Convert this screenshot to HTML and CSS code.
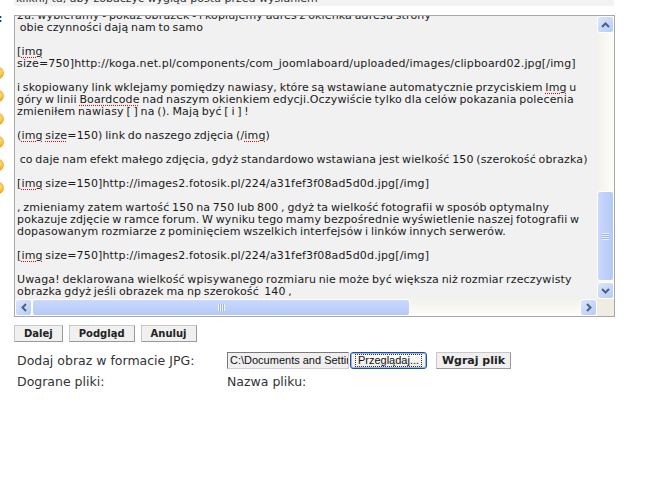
FILE: index.html
```html
<!DOCTYPE html>
<html lang="pl">
<head>
    <meta charset="UTF-8">
    <title>Odpowiedz</title>
    <link rel="stylesheet" href="styles.css">
</head>
<body>
    <div class="page">
        <div class="preview-link"><span>kliknij tu, aby zobaczyć wygląd postu przed wysłaniem</span></div>

        <div class="editor-row">
            <div class="smileys">
                <span class="dots">:</span>
                <span class="smiley first"></span>
                <span class="smiley"></span>
                <span class="smiley"></span>
                <span class="smiley"></span>
                <span class="smiley"></span>
                <span class="smiley"></span>
            </div>

            <div class="editor">
                <div class="editor-text">
<div class="scroll-content">2a. wybieramy - pokaż obrazek - i kopiujemy adres z okienka adresu strony
 obie czynności dają nam to samo

[<span class="spell">img</span>
size=750]http://koga.net.pl/components/com_joomlaboard/uploaded/images/clipboard02.jpg[/img]

i skopiowany link wklejamy pomiędzy nawiasy, które są wstawiane automatycznie przyciskiem <span class="spell">Img</span> u
góry w linii <span class="spell">Boardcode</span> nad naszym okienkiem edycji.Oczywiście tylko dla celów pokazania polecenia
zmieniłem nawiasy [ ] na (). Mają być [ i ] !

(<span class="spell">img</span> <span class="spell">size</span>=150) link do naszego zdjęcia (/<span class="spell">img</span>)

 co daje nam efekt małego zdjęcia, gdyż standardowo wstawiana jest wielkość 150 (szerokość obrazka)

[<span class="spell">img</span> size=150]http://images2.fotosik.pl/224/a31fef3f08ad5d0d.jpg[/img]

, zmieniamy zatem wartość 150 na 750 lub 800 , gdyż ta wielkość fotografii w sposób optymalny
pokazuje zdjęcie w ramce forum. W wyniku tego mamy bezpośrednie wyświetlenie naszej fotografii w
dopasowanym rozmiarze z pominięciem wszelkich interfejsów i linków innych serwerów.

[<span class="spell">img</span> size=750]http://images2.fotosik.pl/224/a31fef3f08ad5d0d.jpg[/img]

Uwaga! deklarowana wielkość wpisywanego rozmiaru nie może być większa niż rozmiar rzeczywisty
obrazka gdyż jeśli obrazek ma np szerokość  140 ,
</div>
                </div>

                <div class="vscroll">
                    <span class="arrow">
                        <svg width="9" height="6" viewBox="0 0 9 6"><path d="M1 5 L4.5 1.5 L8 5" fill="none" stroke="#4d6185" stroke-width="2"/></svg>
                    </span>
                    <span class="track-v">
                        <span class="thumb-v"><span class="grip-v"></span></span>
                    </span>
                    <span class="arrow">
                        <svg width="9" height="6" viewBox="0 0 9 6"><path d="M1 1 L4.5 4.5 L8 1" fill="none" stroke="#4d6185" stroke-width="2"/></svg>
                    </span>
                </div>

                <div class="hscroll">
                    <span class="arrow">
                        <svg width="6" height="9" viewBox="0 0 6 9"><path d="M5 1 L1.5 4.5 L5 8" fill="none" stroke="#4d6185" stroke-width="2"/></svg>
                    </span>
                    <span class="track-h">
                        <span class="thumb-h"><span class="grip-h"></span></span>
                    </span>
                    <span class="arrow">
                        <svg width="6" height="9" viewBox="0 0 6 9"><path d="M1 1 L4.5 4.5 L1 8" fill="none" stroke="#4d6185" stroke-width="2"/></svg>
                    </span>
                </div>

                <div class="corner"></div>
            </div>
        </div>

        <div class="buttons">
            <button class="btn">Dalej</button>
            <button class="btn">Podgląd</button>
            <button class="btn">Anuluj</button>
        </div>

        <div class="upload">
            <div class="label">Dodaj obraz w formacie JPG:</div>
            <div class="file-row">
                <span class="file-path">C:\Documents and Settings\koga\Pulpit\zdjecie.jpg</span>
                <button class="browse-btn"><span>Przeglądaj...</span></button>
                <button class="btn upload-btn">Wgraj plik</button>
            </div>
            <div class="label">Dograne pliki:</div>
            <div class="label">Nazwa pliku:</div>
        </div>
    </div>
</body>
</html>
```

FILE: styles.css
```css
body {
    margin: 0;
    background: #ffffff;
    font-family: 'DejaVu Sans', Verdana, sans-serif;
    color: #222222;
}

.page {
    width: 660px;
}

.preview-link {
    margin-left: 14px;
    width: 600px;
    height: 6px;
    overflow: hidden;
    background: #f3f3f3;
    font-size: 11px;
    line-height: 12px;
}

.preview-link span {
    display: block;
    margin-top: -7px;
    padding-left: 2px;
    color: #333333;
}

.editor-row {
    display: flex;
    margin-top: 9px;
}

.smileys {
    width: 14px;
    overflow: hidden;
    display: flex;
    flex-direction: column;
}

.dots {
    font-size: 11px;
    line-height: 8px;
    font-weight: bold;
    color: #333333;
    margin-left: -2px;
}

.smiley {
    display: block;
    width: 12px;
    height: 12px;
    margin-left: -8px;
    margin-top: 11px;
    border-radius: 50%;
    background: radial-gradient(circle at 60% 40%, #ffe28a, #f0a91c 60%, #b87a10);
}

.smiley.first {
    margin-top: 44px;
}

.editor {
    width: 599px;
    height: 300px;
    border: 1px solid #a8a8a8;
    background: #f1f1f1;
    display: grid;
    grid-template-columns: 1fr 17px;
    grid-template-rows: 1fr 17px;
}

.editor-text {
    overflow: hidden;
    padding-left: 2px;
}

.scroll-content {
    white-space: pre;
    font-size: 11px;
    letter-spacing: 0.15px;
    word-spacing: -1px;
    line-height: 12px;
    margin-top: -6px;
    color: #1a1a1a;
}

.spell {
    text-decoration: underline dotted #e01010;
    text-underline-offset: 2px;
}

.vscroll,
.hscroll {
    display: flex;
    background: linear-gradient(to right, #f3f1ec, #fdfdfa);
}

.vscroll {
    flex-direction: column;
}

.hscroll {
    background: linear-gradient(to bottom, #f3f1ec, #fdfdfa);
}

.arrow {
    flex: none;
    width: 17px;
    height: 17px;
    box-sizing: border-box;
    border: 1px solid #ffffff;
    border-radius: 3px;
    background: linear-gradient(135deg, #dbe6fe, #b7cbf6);
    display: flex;
    align-items: center;
    justify-content: center;
}

.track-v,
.track-h {
    flex: 1;
    display: flex;
}

.track-v {
    flex-direction: column;
    justify-content: flex-end;
    padding-bottom: 1px;
}

.thumb-v,
.thumb-h {
    box-sizing: border-box;
    border: 1px solid #ffffff;
    border-radius: 3px;
    background: linear-gradient(to right, #c9d8fc, #b5c9f7);
    display: flex;
    align-items: center;
    justify-content: center;
}

.thumb-v {
    height: 90px;
}

.thumb-h {
    width: 378px;
    background: linear-gradient(to bottom, #c9d8fc, #b5c9f7);
}

.grip-v {
    width: 7px;
    height: 7px;
    background: repeating-linear-gradient(to bottom, #eef3ff 0 1px, #9db3e6 1px 2px);
}

.grip-h {
    width: 7px;
    height: 7px;
    background: repeating-linear-gradient(to right, #eef3ff 0 1px, #9db3e6 1px 2px);
}

.corner {
    background: #efede2;
}

.buttons {
    display: flex;
    gap: 6px;
    margin: 8px 0 0 14px;
}

.btn {
    font-family: 'DejaVu Sans', Verdana, sans-serif;
    font-size: 10px;
    font-weight: bold;
    color: #222222;
    height: 17px;
    padding: 0 9px;
    background: #f0f0f0;
    border: 1px solid #c8c8c8;
    border-right-color: #9a9a9a;
    border-bottom-color: #9a9a9a;
    line-height: 15px;
    white-space: nowrap;
}

.upload {
    display: grid;
    grid-template-columns: 210px auto;
    row-gap: 5px;
    margin: 10px 0 0 17px;
    font-size: 12.5px;
    color: #333333;
    align-items: center;
}

.label {
    line-height: 16px;
}

.file-row {
    display: flex;
    align-items: center;
}

.file-path {
    width: 118px;
    height: 15px;
    overflow: hidden;
    white-space: nowrap;
    border: 1px solid #7a7a7a;
    border-right-color: #d0d0d0;
    border-bottom-color: #d0d0d0;
    background: #efefef;
    font-family: 'Liberation Sans', Arial, sans-serif;
    font-size: 11px;
    line-height: 15px;
    padding-left: 2px;
    color: #111111;
}

.browse-btn {
    height: 17px;
    width: 77px;
    margin-left: 1px;
    padding: 1px;
    border: 1px solid #1c4ea8;
    border-radius: 3px;
    background: linear-gradient(to bottom, #ffffff, #ecebe4);
    box-shadow: inset 0 0 0 1px #9ab6ea;
    font-family: 'Liberation Sans', Arial, sans-serif;
    font-size: 11px;
    color: #111111;
    display: flex;
    align-items: center;
    justify-content: center;
}

.browse-btn span {
    outline: 1px dotted #333333;
    line-height: 11px;
    padding: 0 2px;
}

.upload-btn {
    margin-left: 9px;
    width: 75px;
    padding: 0;
    font-size: 11px;
}
```
